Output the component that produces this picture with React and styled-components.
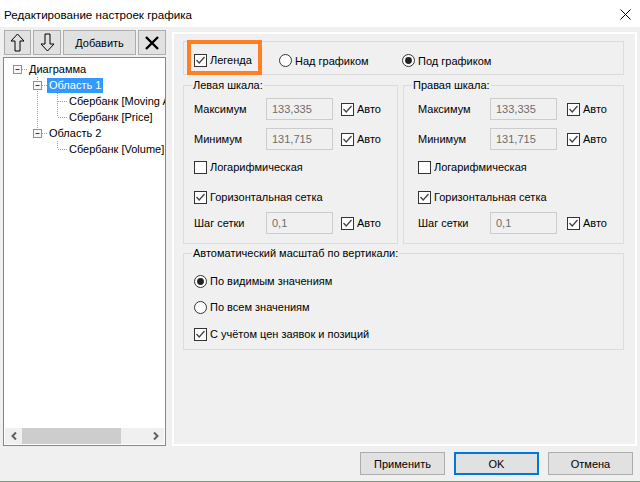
import React from "react"
import styled, { createGlobalStyle } from "styled-components"

const GlobalStyle = createGlobalStyle`
  html, body {
    margin: 0;
    padding: 0;
    background: #f0f0f0;
  }
  body {
    font-family: "Liberation Sans", Arial, sans-serif;
    font-size: 11px;
    color: #000;
  }
  * {
    box-sizing: border-box;
  }
`

const Window = styled.div`
  width: 640px;
  height: 482px;
  display: flex;
  flex-direction: column;
  background: #f0f0f0;
  border-bottom: 1px solid #3cb878;
  overflow: hidden;
`

const TitleBar = styled.div`
  height: 27px;
  flex: none;
  background: #fff;
  display: flex;
  align-items: center;
  justify-content: space-between;
  padding: 2px 9px 0 4px;
  font-size: 11.6px;
`

const Main = styled.div`
  height: 419px;
  flex: none;
  display: flex;
  gap: 6px;
  padding: 3px 4px 0 3px;
`

const Sidebar = styled.div`
  width: 163px;
  flex: none;
  display: flex;
  flex-direction: column;
  gap: 2px;
`

const Toolbar = styled.div`
  height: 25px;
  flex: none;
  display: flex;
  gap: 2px;
  padding-left: 1px;
`

const ToolButton = styled.button`
  width: ${({ $w }) => $w}px;
  height: 25px;
  padding: 0;
  display: flex;
  align-items: center;
  justify-content: center;
  background: #e1e1e1;
  border: 1px solid #adadad;
  font: inherit;
  color: #000;
`

const Tree = styled.div`
  flex: 1;
  display: flex;
  flex-direction: column;
  background: #fff;
  border: 1px solid #828790;
  overflow: hidden;
`

const TreeList = styled.div`
  flex: 1;
  padding: 3px 0 0 3px;
  overflow: hidden;
`

const TreeRow = styled.div`
  height: 16px;
  display: flex;
  align-items: center;
  white-space: nowrap;
`

const TreeLabel = styled.span`
  height: 15px;
  line-height: 15px;
  padding: 0 2px;
  background: ${({ $selected }) => ($selected ? "#3399ff" : "transparent")};
  color: ${({ $selected }) => ($selected ? "#fff" : "#000")};
`

const Scrollbar = styled.div`
  height: 16px;
  flex: none;
  margin: 0 1px 1px;
  display: flex;
  background: #f0f0f0;
`

const ScrollArrow = styled.div`
  width: 17px;
  flex: none;
  display: flex;
  align-items: center;
  justify-content: center;
`

const ScrollThumb = styled.div`
  width: 99px;
  background: #cdcdcd;
`

const ScrollTrack = styled.div`
  flex: 1;
`

const Panel = styled.div`
  flex: 1;
  margin-top: 2px;
  border: 2px solid #fff;
  display: flex;
  flex-direction: column;
  padding: 7px 11px 0 9px;
`

const TopGroup = styled.div`
  height: 34px;
  display: flex;
  align-items: center;
  padding-top: 5px;
  border: 1px solid #dcdcdc;
`

const LegendFrame = styled.div`
  align-self: stretch;
  width: 75px;
  margin: -7px 0 -1px 3px;
  border: 4px solid #ff7f27;
  display: flex;
  align-items: center;
  padding: 5px 0 0 3px;
`

const Option = styled.label`
  display: flex;
  align-items: center;
  gap: 3px;
  white-space: nowrap;
  width: ${({ $w }) => ($w ? `${$w}px` : "auto")};
  margin-left: ${({ $ml }) => $ml || 0}px;
`

const ScalesRow = styled.div`
  display: flex;
  gap: 5px;
  margin-top: 10px;
`

const GroupBox = styled.div`
  width: ${({ $w }) => ($w ? `${$w}px` : "auto")};
  display: flex;
  flex-direction: column;
  border: 1px solid #dcdcdc;
  margin-top: ${({ $mt }) => $mt || 0}px;
`

const GroupTitle = styled.div`
  align-self: flex-start;
  margin: -7px 0 0 ${({ $ml }) => ($ml == null ? 8 : $ml)}px;
  padding: 0 1px;
  height: 13px;
  line-height: 13px;
  background: #f0f0f0;
  white-space: nowrap;
`

const GroupContent = styled.div`
  display: flex;
  flex-direction: column;
  padding: 0 0 ${({ $pb }) => $pb}px ${({ $pl }) => $pl}px;
`

const FieldRow = styled.div`
  height: ${({ $h }) => $h}px;
  margin-top: ${({ $mt }) => $mt}px;
  display: flex;
  align-items: center;
  white-space: nowrap;
`

const FieldLabel = styled.span`
  width: 72px;
  flex: none;
`

const ValueInput = styled.input`
  width: 67px;
  height: 22px;
  flex: none;
  margin: 0 ${({ $gap }) => $gap}px 0 0;
  padding: 0 0 0 5px;
  background: #f0f0f0;
  border: 1px solid #cccccc;
  font: inherit;
  color: #6d6d6d;
  outline: none;
`

const Box = styled.span`
  width: 13px;
  height: 13px;
  flex: none;
  display: flex;
  align-items: center;
  justify-content: center;
  background: #fff;
  border: 1px solid #333;
`

const Footer = styled.div`
  flex: 1;
  display: flex;
  justify-content: flex-end;
  gap: 9px;
  padding: 6px 7px 0 0;
`

const DialogButton = styled.button`
  width: 85px;
  height: 23px;
  padding: 0;
  background: #e1e1e1;
  border: ${({ $primary }) => ($primary ? "2px solid #0078d7" : "1px solid #adadad")};
  font: inherit;
  font-size: 11px;
  color: #000;
`

function CheckBox({ checked, children, ml }) {
  return (
    <Option $ml={ml}>
      <Box>
        {checked && (
          <svg width="11" height="11" viewBox="0 0 11 11">
            <polyline points="1.5,5 4.2,8 9.5,2" fill="none" stroke="#444" strokeWidth="1.3" />
          </svg>
        )}
      </Box>
      <span>{children}</span>
    </Option>
  )
}

function Radio({ checked, children, w, ml }) {
  return (
    <Option $w={w} $ml={ml}>
      <svg width="13" height="13" viewBox="0 0 13 13">
        <circle cx="6.5" cy="6.5" r="6" fill="#fff" stroke="#333" strokeWidth="1" />
        {checked && <circle cx="6.5" cy="6.5" r="3.4" fill="#222" />}
      </svg>
      <span>{children}</span>
    </Option>
  )
}

function Guide({ up, down, right, box }) {
  return (
    <svg width="20" height="16" viewBox="0 0 20 16" style={{ flex: "none" }}>
      <g stroke="#a0a0a0" strokeDasharray="1 1" strokeWidth="1">
        {up && <line x1="10.5" y1="0" x2="10.5" y2="8" />}
        {down && <line x1="10.5" y1="8" x2="10.5" y2="16" />}
        {right && <line x1="11" y1="8.5" x2="20" y2="8.5" />}
      </g>
      {box && (
        <g>
          <rect x="6.5" y="4.5" width="8" height="8" fill="#f7f7f7" stroke="#919191" />
          <line x1="8.5" y1="8.5" x2="12.5" y2="8.5" stroke="#1f3d8f" />
        </g>
      )}
    </svg>
  )
}

const treeRows = [
  { label: "Диаграмма", guides: [{ right: true, box: true }] },
  { label: "Область 1", selected: true, guides: [{}, { up: true, down: true, right: true, box: true }] },
  { label: "Сбербанк [Moving Average]", guides: [{}, { up: true, down: true }, { up: true, down: true, right: true }] },
  { label: "Сбербанк [Price]", guides: [{}, { up: true, down: true }, { up: true, right: true }] },
  { label: "Область 2", guides: [{}, { up: true, right: true, box: true }] },
  { label: "Сбербанк [Volume]", guides: [{}, {}, { up: true, right: true }] },
]

function ScaleGroup({ title, width, pad, gap }) {
  return (
    <GroupBox $w={width}>
      <GroupTitle>{title}</GroupTitle>
      <GroupContent $pl={pad} $pb={9}>
        <FieldRow $h={22} $mt={6}>
          <FieldLabel>Максимум</FieldLabel>
          <ValueInput readOnly defaultValue="133,335" $gap={gap} />
          <CheckBox checked>Авто</CheckBox>
        </FieldRow>
        <FieldRow $h={22} $mt={8}>
          <FieldLabel>Минимум</FieldLabel>
          <ValueInput readOnly defaultValue="131,715" $gap={gap} />
          <CheckBox checked>Авто</CheckBox>
        </FieldRow>
        <FieldRow $h={20} $mt={7}>
          <CheckBox>Логарифмическая</CheckBox>
        </FieldRow>
        <FieldRow $h={20} $mt={10}>
          <CheckBox checked>Горизонтальная сетка</CheckBox>
        </FieldRow>
        <FieldRow $h={22} $mt={5}>
          <FieldLabel>Шаг сетки</FieldLabel>
          <ValueInput readOnly defaultValue="0,1" $gap={gap} />
          <CheckBox checked>Авто</CheckBox>
        </FieldRow>
      </GroupContent>
    </GroupBox>
  )
}

export default function App() {
  return (
    <Window>
      <GlobalStyle />
      <TitleBar>
        <span>Редактирование настроек графика</span>
        <svg width="11" height="11" viewBox="0 0 11 11">
          <path d="M0.5 0.5 L10.5 10.5 M10.5 0.5 L0.5 10.5" stroke="#000" strokeWidth="1" />
        </svg>
      </TitleBar>
      <Main>
        <Sidebar>
          <Toolbar>
            <ToolButton $w={27} title="Вверх">
              <svg width="15" height="19" viewBox="0 0 15 19">
                <path d="M7.5 1 L14 8 L10 8 L10 18 L5 18 L5 8 L1 8 Z" fill="none" stroke="#000" strokeWidth="1" />
              </svg>
            </ToolButton>
            <ToolButton $w={28} title="Вниз">
              <svg width="15" height="19" viewBox="0 0 15 19">
                <path d="M7.5 18 L14 11 L10 11 L10 1 L5 1 L5 11 L1 11 Z" fill="none" stroke="#000" strokeWidth="1" />
              </svg>
            </ToolButton>
            <ToolButton $w={73}>Добавить</ToolButton>
            <ToolButton $w={28} title="Удалить">
              <svg width="16" height="16" viewBox="0 0 16 16">
                <path d="M2 2 L14 14 M14 2 L2 14" stroke="#000" strokeWidth="2.4" />
              </svg>
            </ToolButton>
          </Toolbar>
          <Tree>
            <TreeList>
              {treeRows.map((row) => (
                <TreeRow key={row.label}>
                  {row.guides.map((g, i) => (
                    <Guide key={i} {...g} />
                  ))}
                  <TreeLabel $selected={row.selected}>{row.label}</TreeLabel>
                </TreeRow>
              ))}
            </TreeList>
            <Scrollbar>
              <ScrollArrow>
                <svg width="8" height="10" viewBox="0 0 8 10">
                  <polyline points="6,1.5 2.5,5 6,8.5" fill="none" stroke="#606060" strokeWidth="2" />
                </svg>
              </ScrollArrow>
              <ScrollThumb />
              <ScrollTrack />
              <ScrollArrow>
                <svg width="8" height="10" viewBox="0 0 8 10">
                  <polyline points="2,1.5 5.5,5 2,8.5" fill="none" stroke="#606060" strokeWidth="2" />
                </svg>
              </ScrollArrow>
            </Scrollbar>
          </Tree>
        </Sidebar>
        <Panel>
          <TopGroup>
            <LegendFrame>
              <CheckBox checked>Легенда</CheckBox>
            </LegendFrame>
            <Radio w={123} ml={17}>Над графиком</Radio>
            <Radio checked>Под графиком</Radio>
          </TopGroup>
          <ScalesRow>
            <ScaleGroup title="Левая шкала:" width={215} pad={10} gap={8} />
            <ScaleGroup title="Правая шкала:" width={221} pad={14} gap={10} />
          </ScalesRow>
          <GroupBox $mt={9}>
            <GroupTitle>Автоматический масштаб по вертикали:</GroupTitle>
            <GroupContent $pl={10} $pb={5}>
              <FieldRow $h={20} $mt={11}>
                <Radio checked>По видимым значениям</Radio>
              </FieldRow>
              <FieldRow $h={20} $mt={6}>
                <Radio>По всем значениям</Radio>
              </FieldRow>
              <FieldRow $h={20} $mt={7}>
                <CheckBox checked>С учётом цен заявок и позиций</CheckBox>
              </FieldRow>
            </GroupContent>
          </GroupBox>
        </Panel>
      </Main>
      <Footer>
        <DialogButton>Применить</DialogButton>
        <DialogButton $primary>OK</DialogButton>
        <DialogButton>Отмена</DialogButton>
      </Footer>
    </Window>
  )
}
